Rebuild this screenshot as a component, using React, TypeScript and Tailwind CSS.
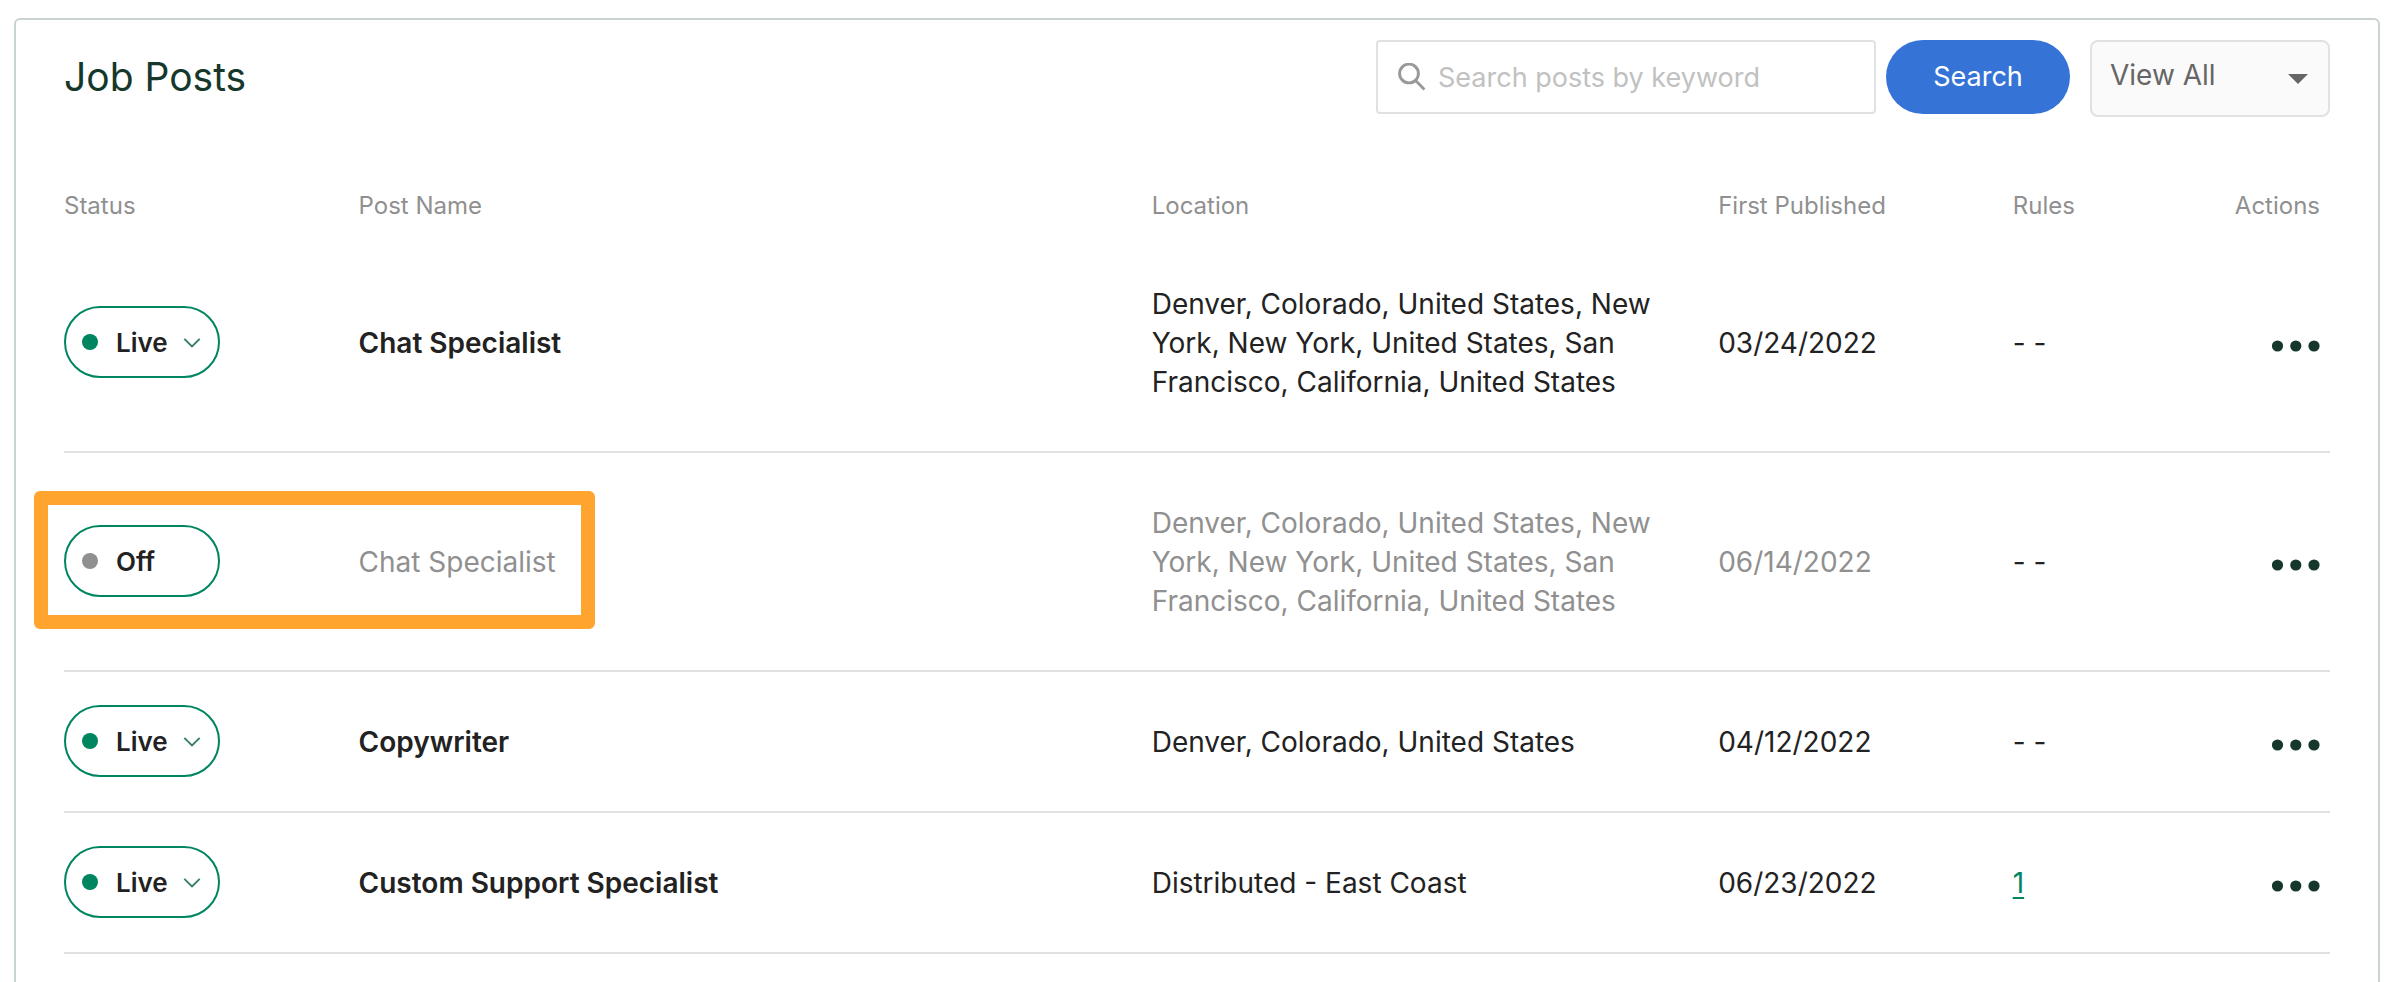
import React from "react";

type Post = {
  id: number;
  live: boolean;
  name: string;
  location: string;
  published: string;
  rules: number;
  highlighted?: boolean;
};

const threeCities =
  "Denver, Colorado, United States, New York, New York, United States, San Francisco, California, United States";

const posts: Post[] = [
  { id: 1, live: true, name: "Chat Specialist", location: threeCities, published: "03/24/2022", rules: 0 },
  { id: 2, live: false, name: "Chat Specialist", location: threeCities, published: "06/14/2022", rules: 0, highlighted: true },
  { id: 3, live: true, name: "Copywriter", location: "Denver, Colorado, United States", published: "04/12/2022", rules: 0 },
  { id: 4, live: true, name: "Custom Support Specialist", location: "Distributed - East Coast", published: "06/23/2022", rules: 1 },
];

function SearchIcon() {
  return (
    <svg className="h-7 w-7 shrink-0" viewBox="0 0 28 28" fill="none" stroke="#999999" strokeWidth="2.9" aria-hidden="true">
      <circle cx="11" cy="10.5" r="9.4" />
      <path d="M17.6 17.4 L26.4 26.4" />
    </svg>
  );
}

function StatusButton({ live }: { live: boolean }) {
  return (
    <button
      type="button"
      className="flex h-[72px] w-[156px] items-center rounded-full border-2 border-[#008561] bg-white pl-4 text-[26px] leading-8 font-semibold text-[#222222]"
    >
      <span className={`h-4 w-4 rounded-full ${live ? "bg-[#008561]" : "bg-[#909090]"}`} />
      <span className="pt-[2px] pl-[18px]">{live ? "Live" : "Off"}</span>
      {live && (
        <svg className="mt-[3px] ml-[15px] h-[10px] w-[18px]" viewBox="0 0 18 10" fill="none" stroke="#3b7d69" strokeWidth="1.9" aria-hidden="true">
          <path d="M1.3 0.9 L9 8.5 L16.7 0.9" />
        </svg>
      )}
    </button>
  );
}

function PostRow({ post }: { post: Post }) {
  const tone = post.live ? "text-[#222222]" : "text-[#909090]";
  return (
    <tr className="border-b-2 border-[#e1e1e1]">
      <td className="relative pb-[2px]">
        <StatusButton live={post.live} />
        {post.highlighted && (
          <div className="pointer-events-none absolute top-[38px] -left-[30px] h-[138px] w-[561px] rounded-md border-14 border-[#ffa42e]" />
        )}
      </td>
      <td className={`pt-[2px] ${tone} ${post.live ? "font-semibold" : ""}`}>{post.name}</td>
      <td className={`pt-[51px] pr-8 pb-[49px] ${tone}`}>{post.location}</td>
      <td className={`pt-[2px] ${tone}`}>{post.published}</td>
      <td className="pt-[2px] text-[#222222]">
        {post.rules > 0 ? (
          <a href="#rules" className="text-[#008561] underline decoration-2 underline-offset-4">
            {post.rules}
          </a>
        ) : (
          "- -"
        )}
      </td>
      <td className="pt-[6px] pr-[10px]">
        <button type="button" aria-label="Actions" className="ml-auto block">
          <svg className="h-3 w-12" viewBox="0 0 48 12" fill="#15372c" aria-hidden="true">
            <circle cx="5.5" cy="6" r="5.6" />
            <circle cx="23.8" cy="6" r="5.6" />
            <circle cx="42" cy="6" r="5.6" />
          </svg>
        </button>
      </td>
    </tr>
  );
}

export default function App() {
  return (
    <div className="flex min-h-screen flex-col bg-white pt-[18px] pr-3 pl-[14px] font-['Inter','Liberation_Sans',sans-serif]">
      <main className="flex-1 rounded-t-md border-2 border-b-0 border-[#c9d3d0] px-12 pt-5">
        <header className="flex items-start">
          <h1 className="flex h-[74px] items-center pb-[2px] text-[39px] leading-none text-[#15372c]">Job Posts</h1>
          <form className="ml-auto flex" onSubmit={(e) => e.preventDefault()}>
            <label className="flex h-[74px] w-[500px] items-center rounded-sm border-2 border-[#e1e1e1] bg-white pl-5">
              <SearchIcon />
              <input
                type="text"
                aria-label="Search posts by keyword"
                placeholder="Search posts by keyword"
                className="min-w-0 flex-1 pt-[2px] pl-3 text-[27px] text-[#222222] outline-none placeholder:text-[#c1c1c1]"
              />
            </label>
            <button type="submit" className="ml-[10px] h-[74px] w-[184px] rounded-full bg-[#3574d6] text-[27px] text-white">
              Search
            </button>
          </form>
          <div className="relative ml-5">
            <select
              aria-label="Filter posts"
              className="h-[77px] w-[240px] appearance-none rounded-lg border-2 border-[#e1e1e1] bg-[#fafafa] pb-2 pl-[18px] text-[28px] text-[#666666]"
            >
              <option>View All</option>
            </select>
            <svg
              className="pointer-events-none absolute top-[34px] right-[22px] h-[10px] w-5"
              viewBox="0 0 20 10"
              fill="#666666"
              aria-hidden="true"
            >
              <path d="M0 0 H20 L10 10 Z" />
            </svg>
          </div>
        </header>

        <table className="mt-[59px] w-full table-fixed border-collapse text-left text-[28px] leading-[39px]">
          <thead>
            <tr className="h-[58px] text-2xl text-[#909090]">
              <th className="w-[13%] pt-[2px] font-normal">Status</th>
              <th className="w-[35%] pt-[2px] font-normal">Post Name</th>
              <th className="w-[25%] pt-[2px] font-normal">Location</th>
              <th className="w-[13%] pt-[2px] font-normal">First Published</th>
              <th className="w-[7%] pt-[2px] font-normal">Rules</th>
              <th className="w-[7%] pt-[2px] pr-[10px] text-right font-normal">Actions</th>
            </tr>
          </thead>
          <tbody>
            {posts.map((post) => (
              <PostRow key={post.id} post={post} />
            ))}
          </tbody>
        </table>
      </main>
    </div>
  );
}
